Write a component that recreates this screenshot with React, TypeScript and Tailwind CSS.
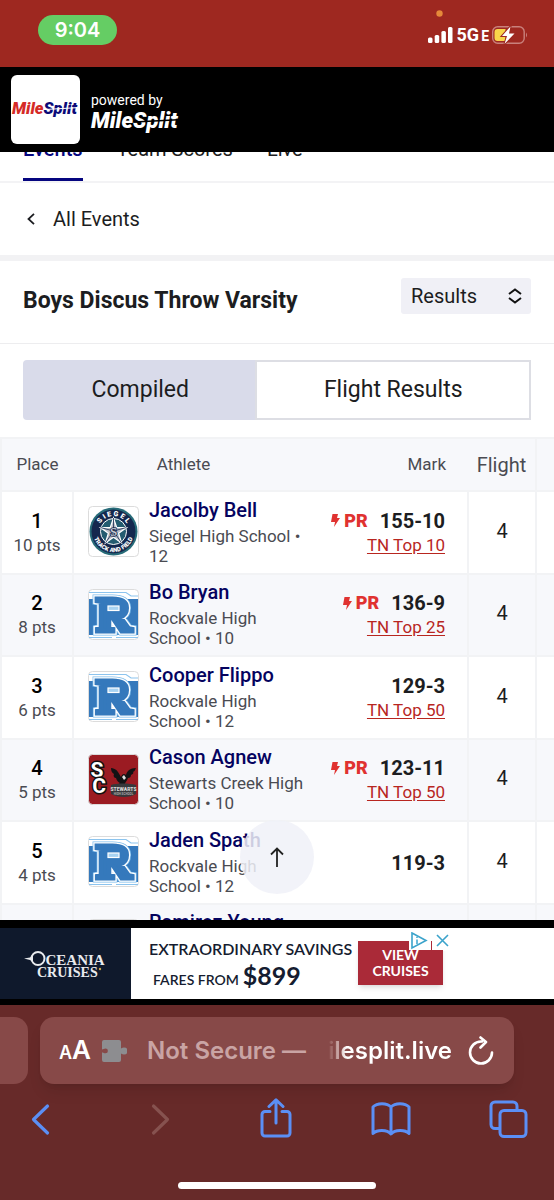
import { useState } from 'react';
import { clsx } from 'clsx';

type School = 'siegel' | 'rockvale' | 'stewarts';

interface Result {
  place: number;
  points: number;
  name: string;
  team: string;
  grade: number;
  school: School;
  mark: string;
  pr?: boolean;
  rank?: string;
  flight: number;
}

const results: Result[] = [
  { place: 1, points: 10, name: 'Jacolby Bell', team: 'Siegel High School', grade: 12, school: 'siegel', mark: '155-10', pr: true, rank: 'TN Top 10', flight: 4 },
  { place: 2, points: 8, name: 'Bo Bryan', team: 'Rockvale High School', grade: 10, school: 'rockvale', mark: '136-9', pr: true, rank: 'TN Top 25', flight: 4 },
  { place: 3, points: 6, name: 'Cooper Flippo', team: 'Rockvale High School', grade: 12, school: 'rockvale', mark: '129-3', rank: 'TN Top 50', flight: 4 },
  { place: 4, points: 5, name: 'Cason Agnew', team: 'Stewarts Creek High School', grade: 10, school: 'stewarts', mark: '123-11', pr: true, rank: 'TN Top 50', flight: 4 },
  { place: 5, points: 4, name: 'Jaden Spath', team: 'Rockvale High School', grade: 12, school: 'rockvale', mark: '119-3', flight: 4 },
  { place: 6, points: 3, name: 'Ramirez Young', team: 'Rockvale High School', grade: 11, school: 'rockvale', mark: '117-8', flight: 4 },
];

function StatusBar() {
  return (
    <div className="flex h-[67px] shrink-0 items-start justify-between bg-[#9e2820] pl-[38px] pr-[26px] text-white">
      <div className="mt-[15px] flex h-[30px] w-[79px] items-center justify-center rounded-full bg-[#65cd64] font-[Inter] text-xl font-semibold">
        9:04
      </div>
      <div className="flex flex-col">
        <svg className="ml-2 mt-[10px] h-[7px] w-[7px]" viewBox="0 0 7 7">
          <circle cx="3.5" cy="3.5" r="3.2" fill="#e5893a" />
        </svg>
        <div className="mt-2 flex h-5 items-center">
          <svg className="h-5 w-[25px]" viewBox="0 0 25 20" fill="#fff">
            <rect x="0" y="12.500" width="4.500" height="5.500" rx="1.5" />
            <rect x="6.700" y="10" width="4.500" height="8" rx="1.5" />
            <rect x="13.400" y="6" width="4.500" height="12" rx="1.5" />
            <rect x="20" y="2" width="4.500" height="16" rx="1.5" />
          </svg>
          <span className="ml-1 font-[Roboto] text-lg leading-5 font-bold">
            5G<span className="ml-[2px] text-sm leading-5">E</span>
          </span>
          <svg className="ml-[3px] h-5 w-9" viewBox="0 0 36 20">
            <rect x="0.700" y="1.700" width="31.500" height="16.500" rx="5" fill="none" stroke="#c9817c" strokeWidth="1.400" />
            <path d="M34 7.500a4 4 0 0 1 0 5z" fill="#c9817c" />
            <path d="M5.500 4h8v12h-8a3 3 0 0 1-3-3V7a3 3 0 0 1 3-3z" fill="#f9d54a" />
            <path d="M18.500 1.500L10 11h5L12.500 19L22.500 8.500H17z" fill="#fff" stroke="#9e2820" strokeWidth="2" paintOrder="stroke" />
          </svg>
        </div>
      </div>
    </div>
  );
}

// Italic wordmark with the cut running through "Split"
function Wordmark({ large = false }: { large?: boolean }) {
  return large ? (
    <svg className="h-6 w-[92px] overflow-visible" viewBox="0 0 92 24" role="img" aria-label="MileSplit">
      <text x="0" y="18" fontFamily="Roboto" fontSize="22" fontWeight="900" fontStyle="italic" fill="#fff">MileSplit</text>
      <path d="M43 12L92 9.500" stroke="#000" strokeWidth="1.400" />
    </svg>
  ) : (
    <svg className="h-5 w-[69px]" viewBox="0 0 69 20" role="img" aria-label="MileSplit">
      <text x="1" y="14" fontFamily="Roboto" fontSize="16.500" fontWeight="900" fontStyle="italic" fill="#d52b27">
        Mile<tspan fill="#0b0a78">Split</tspan>
      </text>
      <path d="M34 9.500L69 7.500" stroke="#fff" strokeWidth="1.200" />
    </svg>
  );
}

function SiteHeader() {
  return (
    <header className="flex h-[85px] shrink-0 items-center gap-[11px] bg-black px-[11px] text-white">
      <div className="flex h-[69px] w-[69px] items-center justify-center overflow-hidden rounded-md bg-white">
        <Wordmark />
      </div>
      <div className="flex flex-col gap-[2px] pt-[6px]">
        <span className="text-sm leading-4">powered by</span>
        <Wordmark large />
      </div>
    </header>
  );
}

function SchoolLogo({ school }: { school: School }) {
  if (school === 'siegel') {
    return (
      <svg className="h-[51px] w-[51px] shrink-0" viewBox="0 0 51 51" role="img" aria-label="Siegel">
        <rect x="0.500" y="0.500" width="50" height="50" rx="4" fill="#fff" stroke="#dcdcdc" />
        <circle cx="25.500" cy="25.500" r="24" fill="#276b78" />
        <circle cx="25.500" cy="25.500" r="22" fill="#14284e" />
        <circle cx="25.500" cy="25.500" r="13" fill="#245c70" stroke="#fff" strokeWidth="1" />
        <path id="siegel-top" d="M10 25.500a15.500 15.500 0 0 1 31 0" fill="none" />
        <path id="siegel-bottom" d="M5 25.500a20.500 20.500 0 0 0 41 0" fill="none" />
        <text fontFamily="Roboto" fontSize="7" fontWeight="900" fill="#fff" textAnchor="middle">
          <textPath href="#siegel-top" startOffset="50%">S I E G E L</textPath>
        </text>
        <text fontFamily="Roboto" fontSize="6" fontWeight="900" fill="#fff" textAnchor="middle">
          <textPath href="#siegel-bottom" startOffset="50%">TRACK AND FIELD</textPath>
        </text>
        <path
          d="M25.500 12L28.700 21.500L38.500 21.500L30.700 27.300L33.600 37L25.500 31.200L17.400 37L20.300 27.300L12.500 21.500L22.300 21.500Z"
          fill="#b9bec8"
          stroke="#fff"
          strokeWidth="1.200"
        />
        <path d="M25.500 12V25L12.500 21.500M25.500 25L17.400 37M25.500 25L33.600 37M25.500 25L38.500 21.500" fill="none" stroke="#14284e" strokeWidth="0.800" />
        <text x="25.500" y="29.500" fontFamily="Liberation Serif" fontSize="13" fontWeight="700" fill="#c5c8d0" stroke="#14284e" strokeWidth="1.500" paintOrder="stroke" textAnchor="middle">S</text>
      </svg>
    );
  }

  if (school === 'stewarts') {
    return (
      <svg className="h-[51px] w-[51px] shrink-0" viewBox="0 0 51 51" role="img" aria-label="Stewarts Creek">
        <rect x="0.500" y="0.500" width="50" height="50" rx="4" fill="#9b1b22" stroke="#dcdcdc" />
        <g fontFamily="Roboto" fontSize="21" fontWeight="700" fill="#fff" stroke="#111" strokeWidth="3" paintOrder="stroke" textAnchor="middle">
          <text x="9" y="23">S</text>
          <text x="11" y="39">C</text>
        </g>
        <path
          d="M23 14c2 0 5 1 7 4l3 5c1-3 3-4 5-2c1-4 4-7 10-7c-1 2-1 3-3 4c1 1 0 2-2 3c0 2-1 3-3 3c-1 3-3 4-3 6l4 3H27l5-4c-2-1-3-2-4-5c-2 0-3-2-2-4c-2-1-3-3-3-6z"
          fill="#121214"
        />
        <path d="M34 23l2-2 2 3-2 2z" fill="#ddd" />
        <path d="M23 31c6-2 18-2 25 0v9c-6 4-18 4-25 0z" fill="#37383b" />
        <text x="35.500" y="37" fontFamily="Roboto" fontSize="5" fontWeight="900" fill="#d6d6d6" textAnchor="middle">STEWARTS</text>
        <text x="35.500" y="41" fontFamily="Roboto" fontSize="3" fontWeight="700" fill="#aaa" textAnchor="middle">HIGH SCHOOL</text>
      </svg>
    );
  }

  return (
    <svg className="h-[51px] w-[51px] shrink-0" viewBox="0 0 51 51" role="img" aria-label="Rockvale">
      <rect x="0.500" y="0.500" width="50" height="50" rx="4" fill="#fff" stroke="#dcdcdc" />
      <path d="M1 3.500H38L43 7H50M1 48.500H24M50 48.500H28" fill="none" stroke="#8cc4ee" strokeWidth="1.200" />
      <path d="M1 10H50V46H1z" fill="#3579bc" />
      <g fontFamily="Liberation Serif" fontSize="49" fontWeight="700" textAnchor="middle" strokeLinejoin="miter">
        <text x="26" y="42" fill="#7fbdec" stroke="#7fbdec" strokeWidth="9">R</text>
        <text x="26" y="42" fill="#fff" stroke="#fff" strokeWidth="7.500">R</text>
        <text x="26" y="42" fill="#3579bc" stroke="#3579bc" strokeWidth="5">R</text>
      </g>
      <path d="M18 14H32V25H18z" fill="#3579bc" />
      <rect x="20" y="17" width="11" height="4.500" fill="#a8d3f2" stroke="#fff" strokeWidth="1.200" />
    </svg>
  );
}

function PrBadge() {
  return (
    <span className="flex items-center gap-1 text-lg leading-6 font-black text-[#e03230]">
      <svg className="h-[13px] w-[9px]" viewBox="0 0 9 13" fill="currentColor">
        <path d="M1.500 0H7L6 4H9L3 13L4 8H0z" />
      </svg>
      PR
    </span>
  );
}

function ResultRow({ result }: { result: Result }) {
  return (
    <tr className="odd:h-[83px] odd:bg-white even:h-[82px] even:bg-[#f7f8fb]">
      <td className="border-2 border-[#f2f3f5] text-center">
        <div className="text-xl leading-6 font-medium text-black">{result.place}</div>
        <div className="text-[17px] leading-6 text-[#4a4b52]">{`${result.points} pts`}</div>
      </td>
      <td className="border-y-2 border-[#f2f3f5] pb-[2px] pl-[14px]">
        <div className="flex items-center gap-[10px]">
          <SchoolLogo school={result.school} />
          <div className="flex-1">
            <a href="#athlete" className="block text-xl leading-6 font-medium text-[#05035f]">{result.name}</a>
            <div className="mt-1 text-[17px] leading-5 text-[#4a4b52]">{`${result.team} • ${result.grade}`}</div>
          </div>
        </div>
      </td>
      <td className="border-y-2 border-[#f2f3f5] pr-[22px]">
        <div className="flex flex-col items-end">
          <div className="flex items-center gap-3">
            {result.pr && <PrBadge />}
            <span className="text-xl leading-6 font-bold text-[#1c1d21]">{result.mark}</span>
          </div>
          {result.rank && (
            <a href="#ranking" className="text-[17px] leading-6 text-[#b8261f] underline underline-offset-2">{result.rank}</a>
          )}
        </div>
      </td>
      <td className="border-2 border-[#f2f3f5] pb-1 text-center text-xl text-[#1c1d21]">{result.flight}</td>
      <td className="border-y-2 border-[#f2f3f5]" />
    </tr>
  );
}

function ResultsTable() {
  return (
    <table className="w-full table-fixed border-collapse">
      <colgroup>
        <col className="w-[72px]" />
        <col />
        <col className="w-[160px]" />
        <col className="w-[68px]" />
        <col className="w-[18px]" />
      </colgroup>
      <thead>
        <tr className="h-[53px] bg-[#f7f8fb] text-[17px] text-[#4a4b52]">
          <th className="border-l-2 border-t-2 border-[#f2f3f5] font-normal">Place</th>
          <th className="border-t-2 border-[#f2f3f5] pr-[14px] font-normal">Athlete</th>
          <th className="border-t-2 border-[#f2f3f5] pr-[22px] text-right font-normal">Mark</th>
          <th className="border-r-2 border-t-2 border-[#f2f3f5] text-xl font-normal">Flight</th>
          <th className="border-t-2 border-[#f2f3f5]" />
        </tr>
      </thead>
      <tbody>
        {results.map((result) => (
          <ResultRow key={result.place} result={result} />
        ))}
      </tbody>
    </table>
  );
}

function EventPage() {
  const [view, setView] = useState('Compiled');

  return (
    <div className="relative min-h-0 flex-1">
      <main className="h-full overflow-hidden bg-white text-[#1c1d21]">
        {/* Scrolled under the header, only the lower edge shows */}
        <nav className="flex h-[31px] items-end gap-[34px] overflow-hidden border-b-2 border-[#f3f3f5] px-[23px] text-xl leading-6">
          <a href="#events" className="border-b-[3px] border-[#05057f] pb-[17px] font-medium text-[#05057f]">Events</a>
          <a href="#scores" className="border-b-[3px] border-transparent pb-[17px]">Team Scores</a>
          <a href="#live" className="border-b-[3px] border-transparent pb-[17px]">Live</a>
        </nav>
        <a href="#all" className="flex h-[72px] items-center gap-[18px] pl-[27px] text-xl">
          <svg className="h-3 w-2" viewBox="0 0 8 12" fill="none" stroke="currentColor" strokeWidth="1.800">
            <path d="M7 0.800L1.500 6L7 11.200" />
          </svg>
          All Events
        </a>
        <div className="h-[6px] bg-[#f2f2f4]" />
        <div className="flex items-start justify-between border-b border-[#ededef] px-[23px] pb-[27px] pt-[17px]">
          <h1 className="mt-2 text-[23px] leading-[30px] font-bold">Boys Discus Throw Varsity</h1>
          <div className="relative -mb-px w-[130px]">
            <select aria-label="View" className="h-9 w-full appearance-none rounded-[3px] bg-[#f0f0f6] pl-[10px] text-xl leading-6">
              <option>Results</option>
            </select>
            <svg className="pointer-events-none absolute right-[9px] top-[10px] h-4 w-[14px]" viewBox="0 0 14 16" fill="none" stroke="#111" strokeWidth="2">
              <path d="M1 6L7 1.500L13 6M1 10L7 14.500L13 10" />
            </svg>
          </div>
        </div>
        <div className="flex px-[23px] pb-[17px] pt-4 text-[23px]">
          {['Compiled', 'Flight Results'].map((label) => (
            <button
              key={label}
              onClick={() => setView(label)}
              className={clsx(
                'h-[60px] flex-auto border-2 first:rounded-l first:border-r-0',
                view === label ? 'border-[#d9dbea] bg-[#d9dbea]' : 'border-[#dddee4] bg-white'
              )}
            >
              {label}
            </button>
          ))}
        </div>
        <ResultsTable />
      </main>
      <button aria-label="Back to top" className="absolute bottom-[26px] left-1/2 flex h-[74px] w-[74px] -translate-x-1/2 items-center justify-center rounded-full bg-[#f0f1f8]/85">
        <svg className="h-5 w-[14px]" viewBox="0 0 14 20" fill="none" stroke="#222" strokeWidth="1.800">
          <path d="M7 20V1.500M1 7.500L7 1.500L13 7.500" />
        </svg>
      </button>
    </div>
  );
}

function AdBanner() {
  return (
    <aside className="relative flex h-[85px] shrink-0 border-b-[6px] border-t-8 border-black bg-white font-[Lato] text-[#151c30]">
      <div className="flex w-[131px] items-center justify-center bg-[#0f192c]">
        <svg className="h-9 w-[90px]" viewBox="0 0 90 36" role="img" aria-label="Oceania Cruises" fill="#e9ebee" fontFamily="Liberation Serif" fontWeight="700">
          <path d="M3 12.500L9 11.500L12 9L12 16L9 14z" />
          <circle cx="17" cy="12.500" r="6.500" fill="none" stroke="#e9ebee" strokeWidth="2" />
          <text x="24.500" y="19" fontSize="15">CEANIA</text>
          <text x="16" y="31" fontSize="14">CRUISES</text>
          <circle cx="79" cy="23" r="1.200" fill="#c8a54b" />
        </svg>
      </div>
      <div className="flex flex-col justify-center gap-1 pl-[18px] pt-1">
        <span className="text-base leading-5 font-semibold">EXTRAORDINARY SAVINGS</span>
        <span className="flex items-baseline gap-1 pl-1 text-sm leading-6 font-semibold">
          FARES FROM <span className="text-[25px] leading-6 font-bold">$899</span>
        </span>
      </div>
      <button className="ml-auto mr-[111px] mt-[13px] h-11 w-[85px] bg-[#aa2a38] text-sm leading-4 font-bold text-white shadow-md">
        VIEW CRUISES
      </button>
      <svg className="absolute left-[409px] top-1 h-[19px] w-[42px]" viewBox="0 0 42 19" fill="none">
        <path d="M0 4H42V19H34V18H0z" fill="#fff" />
        <path d="M3 1L17 8.500L3 16z" stroke="#3ba3cb" strokeWidth="1.600" />
        <path d="M8 7.500V12M8 4.800V6" stroke="#3ba3cb" strokeWidth="1.500" />
        <path d="M22.500 9V19" stroke="#aa2a38" />
        <path d="M28 3L39 14M39 3L28 14" stroke="#3ba3cb" strokeWidth="1.600" />
      </svg>
    </aside>
  );
}

function BrowserBar() {
  return (
    <footer className="shrink-0 bg-[#672a29] pb-[11px] pt-3 font-[Inter]">
      <div className="flex gap-3">
        <div className="h-[67px] w-7 rounded-r-[14px] bg-[#874948]" />
        <div className="mr-10 flex h-[67px] flex-1 items-center rounded-[14px] bg-[#874948] pl-[19px] pr-5 text-2xl font-semibold text-white shadow-lg">
          <button aria-label="Page settings" className="flex items-baseline font-semibold">
            <span className="text-lg">A</span>
            <span className="text-[26px]">A</span>
          </button>
          <svg className="ml-[10px] h-[22px] w-[26px]" viewBox="0 0 26 22">
            <path
              d="M3 0H18a2 2 0 0 1 2 2V8.500c1-.7 2-1 3-1a3.300 3.300 0 0 1 0 7c-1 0-2-.3-3-1V20a2 2 0 0 1-2 2H3a2 2 0 0 1-2-2V12.500c1.500 0 2 .8 3.500.8a2.400 2.400 0 0 0 0-4.800C3 8.500 2.500 9.500 1 9.500V2a2 2 0 0 1 2-2z"
              fill="#8d8d90"
            />
          </svg>
          <span className="ml-5 whitespace-nowrap text-[#c9a4a4]">Not Secure —</span>
          <span className="ml-auto whitespace-nowrap bg-linear-to-r from-[#874948] to-white to-15% bg-clip-text text-transparent">ilesplit.live</span>
          <button aria-label="Reload" className="ml-4">
            <svg className="h-[30px] w-[26px]" viewBox="0 0 26 30" fill="none" stroke="#fff" strokeWidth="2.600" strokeLinecap="round" strokeLinejoin="round">
              <path d="M14 5.500H13A11 11 0 1 0 24 16.500M12.500 1.500L18 6L12.500 11.500" />
            </svg>
          </button>
        </div>
      </div>
      <div className="mt-[14px] flex items-center justify-between pl-5 pr-[26px] text-[#5b8ff5]">
        <button aria-label="Back" className="flex w-10 justify-center">
          <svg className="h-10 w-5" viewBox="0 0 20 40" fill="none" stroke="currentColor" strokeWidth="3.200" strokeLinecap="round" strokeLinejoin="round">
            <path d="M17.500 8L3.500 21.500L17.500 35" />
          </svg>
        </button>
        <button aria-label="Forward" disabled className="flex w-10 justify-center pl-2">
          <svg className="h-10 w-5" viewBox="0 0 20 40" fill="none" stroke="#86524f" strokeWidth="3.200" strokeLinecap="round" strokeLinejoin="round">
            <path d="M2.500 8L16.500 21.500L2.500 35" />
          </svg>
        </button>
        <button aria-label="Share" className="flex w-10 justify-center pl-1">
          <svg className="h-10 w-8" viewBox="0 0 32 40" fill="none" stroke="currentColor" strokeWidth="3" strokeLinecap="round" strokeLinejoin="round">
            <path d="M10 13.500H5a3 3 0 0 0-3 3V35a3 3 0 0 0 3 3H27a3 3 0 0 0 3-3V16.500a3 3 0 0 0-3-3H22M16 25V2M9 8.500L16 1.800L23 8.500" />
          </svg>
        </button>
        <button aria-label="Bookmarks">
          <svg className="h-10 w-10" viewBox="0 0 40 40" fill="none" stroke="currentColor" strokeWidth="3" strokeLinejoin="round">
            <path d="M20 9C16 4.500 6 4.500 2 9V35.500C6 31.500 16 31.500 20 36C24 31.500 34 31.500 38 35.500V9C34 4.500 24 4.500 20 9zM20 9V36" />
          </svg>
        </button>
        <button aria-label="Tabs">
          <svg className="h-10 w-10" viewBox="0 0 40 40" fill="none" stroke="currentColor" strokeWidth="3">
            <path d="M11 30.500H7a4 4 0 0 1-4-4V8a4 4 0 0 1 4-4H25a4 4 0 0 1 4 4V12" />
            <rect x="12" y="12.500" width="26" height="26" rx="4" />
          </svg>
        </button>
      </div>
      <div className="mx-auto mt-11 h-[7px] w-[198px] rounded-full bg-white" />
    </footer>
  );
}

export default function App() {
  return (
    <div className="flex h-screen flex-col overflow-hidden font-[Roboto,sans-serif]">
      <StatusBar />
      <SiteHeader />
      <EventPage />
      <AdBanner />
      <BrowserBar />
    </div>
  );
}
